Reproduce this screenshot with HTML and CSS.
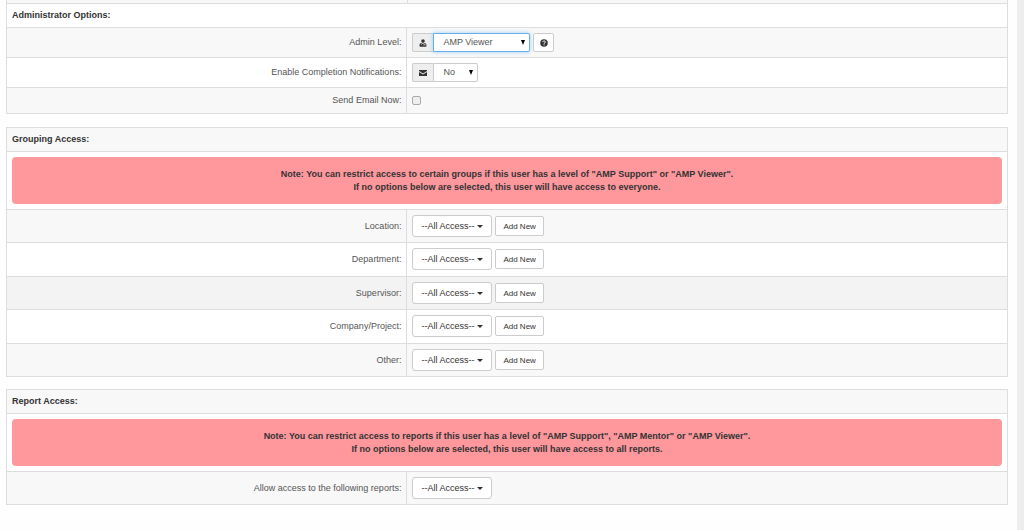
FILE: index.html
```
<!DOCTYPE html>
<html lang="en">
<head>
<meta charset="utf-8">
<title>User Options</title>
<link rel="stylesheet" href="styles.css">
</head>
<body>
<main class="page">
<form class="content">
<div class="previous-panel"><span></span><span></span></div>
<table class="panel">
<colgroup><col class="col-label"><col></colgroup>
<tbody>
<tr><th class="heading" colspan="2">Administrator Options:</th></tr>
<tr class="striped">
<td class="label"><label for="level">Admin Level:</label></td>
<td><div class="controls">
<div class="input-group focused">
<span class="addon"><svg class="icon" viewBox="0 0 16 16" aria-hidden="true"><circle cx="8" cy="4.200" r="3.600"/><path d="M5 8l3 2 3-2c3 .3 4 2.500 4 5.500 0 1.500-1 2-2 2H3c-1 0-2-.5-2-2C1 10.500 2 8.300 5 8z"/><path class="detail" d="M5 9v3.500M11 9v2M9.500 13.500V11h3v2.500"/></svg></span>
<select id="level" class="select select-level"><option>AMP Viewer</option></select>
</div>
<button type="button" class="button button-help" aria-label="Help"><svg class="icon" viewBox="0 0 16 16" aria-hidden="true"><circle cx="8" cy="8" r="7.500"/><path class="mark" d="M5.500 6.200C5.600 3 10.600 3 10.600 6c0 1.800-2.500 1.800-2.500 3.500M8.100 10.800v2"/></svg></button>
</div></td>
</tr>
<tr>
<td class="label"><label for="notify">Enable Completion Notifications:</label></td>
<td><div class="controls">
<div class="input-group">
<span class="addon"><svg class="icon" viewBox="0 0 16 16" aria-hidden="true"><path d="M0 2h16v2L8 9 0 4zM0 6l8 5 8-5v8H0z"/></svg></span>
<select id="notify" class="select select-notify"><option>No</option><option>Yes</option></select>
</div>
</div></td>
</tr>
<tr class="striped">
<td class="label"><label for="send">Send Email Now:</label></td>
<td><div class="controls"><input id="send" class="checkbox" type="checkbox"></div></td>
</tr>
</tbody>
</table>

<table class="panel panel-groups">
<colgroup><col class="col-label"><col></colgroup>
<tbody>
<tr class="striped"><th class="heading" colspan="2">Grouping Access:</th></tr>
<tr><td colspan="2"><div class="alert">Note: You can restrict access to certain groups if this user has a level of "AMP Support" or "AMP Viewer".<br>If no options below are selected, this user will have access to everyone.</div></td></tr>
<tr class="striped"><td class="label">Location:</td><td><div class="controls"><button type="button" class="button dropdown">--All Access--<span class="caret"></span></button><button type="button" class="button button-small">Add New</button></div></td></tr>
<tr><td class="label">Department:</td><td><div class="controls"><button type="button" class="button dropdown">--All Access--<span class="caret"></span></button><button type="button" class="button button-small">Add New</button></div></td></tr>
<tr class="striped hovered"><td class="label">Supervisor:</td><td><div class="controls"><button type="button" class="button dropdown">--All Access--<span class="caret"></span></button><button type="button" class="button button-small">Add New</button></div></td></tr>
<tr><td class="label">Company/Project:</td><td><div class="controls"><button type="button" class="button dropdown">--All Access--<span class="caret"></span></button><button type="button" class="button button-small">Add New</button></div></td></tr>
<tr class="striped"><td class="label">Other:</td><td><div class="controls"><button type="button" class="button dropdown">--All Access--<span class="caret"></span></button><button type="button" class="button button-small">Add New</button></div></td></tr>
</tbody>
</table>

<table class="panel">
<colgroup><col class="col-label"><col></colgroup>
<tbody>
<tr class="striped"><th class="heading" colspan="2">Report Access:</th></tr>
<tr><td colspan="2"><div class="alert">Note: You can restrict access to reports if this user has a level of "AMP Support", "AMP Mentor" or "AMP Viewer".<br>If no options below are selected, this user will have access to all reports.</div></td></tr>
<tr class="striped"><td class="label">Allow access to the following reports:</td><td><div class="controls"><button type="button" class="button dropdown">--All Access--<span class="caret"></span></button></div></td></tr>
</tbody>
</table>
</form>
</main>
</body>
</html>
```
FILE: styles.css
```
* { box-sizing: border-box; }

body {
  margin: 0;
  background: #eeeeee;
  color: #555;
  font: 9px/13px "Liberation Sans", Arial, sans-serif;
}

.page {
  min-height: 100vh;
  margin-right: 7px;
  background: #fefefe;
}

.content { padding: 0 9px 24px 6px; }

.previous-panel {
  display: grid;
  grid-template-columns: 40% 60%;
  height: 3px;
  background: #f8f8f8;
  border: solid #ddd;
  border-width: 0 1px;
}

.previous-panel span + span { border-left: 1px solid #ddd; }

.panel {
  width: 100%;
  margin-bottom: 13px;
  border-collapse: collapse;
  table-layout: fixed;
  background: #fff;
}

.col-label { width: 40%; }

.panel td, .panel th {
  padding: 5px;
  border: 1px solid #ddd;
  vertical-align: middle;
}

.panel .heading {
  color: #333;
  text-align: left;
  font-weight: bold;
}

.panel .label { text-align: right; }

.panel-groups { margin-bottom: 12px; }
.panel-groups tr:nth-child(even):not(:nth-child(2)) td { padding-bottom: 6px; }

.striped { background: #f8f8f8; }
.hovered { background: #f3f3f3; }

.alert {
  padding: 11px 10px 10px;
  border-radius: 4px;
  background: #ff989d;
  color: #333;
  text-align: center;
  font-weight: bold;
}

.controls {
  display: flex;
  align-items: center;
  gap: 3px;
}

.input-group { display: flex; height: 19px; }

.addon {
  display: flex;
  align-items: center;
  justify-content: center;
  width: 21px;
  border: 1px solid #ccc;
  border-right: 0;
  border-radius: 2px 0 0 2px;
  background: #eee;
}

.icon { width: 8px; height: 8px; fill: #333; }
.mark { fill: none; stroke: #fff; stroke-width: 2; }
.detail { fill: none; stroke: #eee; stroke-width: 1; }

.select {
  appearance: none;
  padding: 0 9px;
  border: 1px solid #ccc;
  border-radius: 0 2px 2px 0;
  background: #fff url("data:image/svg+xml,%3Csvg xmlns='http://www.w3.org/2000/svg' viewBox='0 0 4 5'%3E%3Cpath d='M0 0h4L2 5z'/%3E%3C/svg%3E") no-repeat right 4px center / 4px 5px;
  color: #555;
  font: 9px/13px "Liberation Sans", Arial, sans-serif;
}

.select-level { width: 97px; }
.select-notify { width: 45px; }

.focused .select {
  border-color: #66afe9;
  box-shadow: 0 0 4px #9ccdf2;
}

.button {
  display: inline-flex;
  align-items: center;
  justify-content: center;
  padding: 0 7px;
  border: 1px solid #ccc;
  border-radius: 2px;
  background: #fff;
  color: #333;
  font: 9px/13px "Liberation Sans", Arial, sans-serif;
}

.button-help { width: 21px; height: 19px; padding: 0; }
.dropdown { height: 22px; gap: 3px; padding: 0 8px; border-radius: 3px; }
.button-small { height: 20px; font-size: 8px; }

.caret {
  border: solid transparent;
  border-width: 3px 3px 0;
  border-top-color: #333;
}

.checkbox {
  appearance: none;
  width: 9px;
  height: 9px;
  margin: 3px 0;
  border: 1px solid #aaa;
  border-radius: 2px;
  background: #eee;
}

.checkbox:checked { background: #555; }
```
